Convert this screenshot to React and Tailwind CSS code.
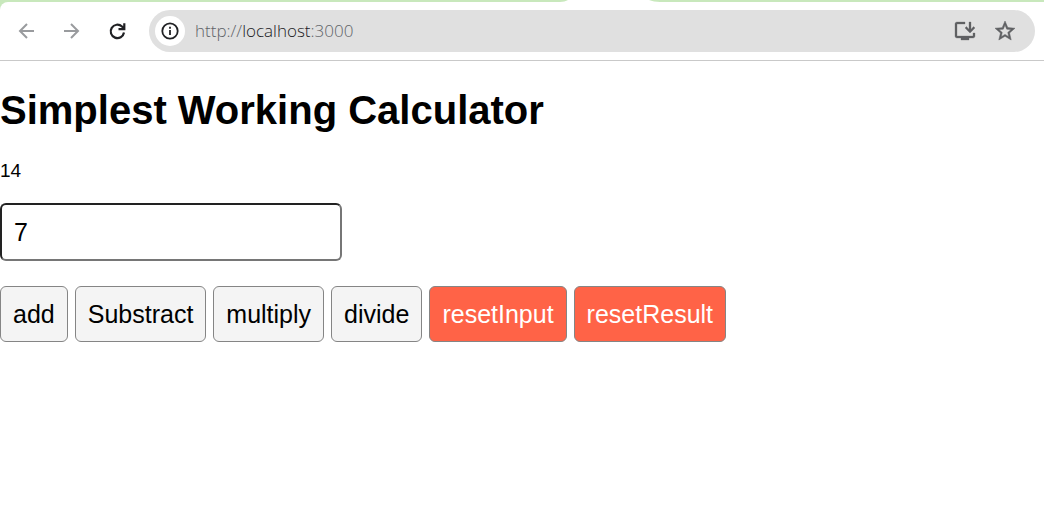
import { useState } from "react";

function BackIcon() {
  return (
    <svg viewBox="0 0 24 24" className="size-6" fill="none" stroke="currentColor" strokeWidth="2" aria-hidden="true">
      <path d="M19 12H5.400M12 5l-7 7 7 7" />
    </svg>
  );
}

function ForwardIcon() {
  return (
    <svg viewBox="0 0 24 24" className="size-6" fill="none" stroke="currentColor" strokeWidth="2" aria-hidden="true">
      <path d="M4 12h13.600M11 5l7 7-7 7" />
    </svg>
  );
}

function ReloadIcon() {
  return (
    <svg viewBox="0 0 24 24" className="size-6" fill="none" stroke="currentColor" strokeWidth="2.2" aria-hidden="true">
      <path d="M19 13.500A6.700 6.700 0 1 1 17 7.500l2 2" />
      <path d="M19.300 4.300v5.800h-5.800" />
      <path d="M16 9.500L19.300 6.500v3.600z" fill="currentColor" stroke="none" />
    </svg>
  );
}

function InfoIcon() {
  return (
    <svg viewBox="0 0 20 20" className="size-5" fill="none" stroke="currentColor" strokeWidth="1.800" aria-hidden="true">
      <circle cx="10" cy="10" r="7.700" />
      <path d="M10 9v5M10 5.800v1.900" />
    </svg>
  );
}

function InstallIcon() {
  return (
    <svg viewBox="0 0 24 24" className="size-6" fill="currentColor" stroke="currentColor" strokeWidth="0.3" aria-hidden="true">
      <path d="M20 17H4V5h8V3H4c-1.110 0-2 .89-2 2v12c0 1.100.89 2 2 2h4v2h8v-2h4c1.100 0 2-.9 2-2v-3h-2v3z" />
      <path d="M17 14l5-5-1.410-1.410L18 10.170V3h-2v7.170l-2.590-2.580L12 9l5 5z" />
    </svg>
  );
}

function StarIcon() {
  return (
    <svg viewBox="0 0 24 24" className="size-6" fill="currentColor" stroke="currentColor" strokeWidth="0.5" aria-hidden="true">
      <path d="M22 9.240l-7.190-.62L12 2 9.190 8.630 2 9.240l5.460 4.730L5.820 21 12 17.270 18.180 21l-1.630-7.030L22 9.240zM12 15.400l-3.760 2.270 1-4.280-3.320-2.880 4.380-.38L12 6.100l1.710 4.040 4.380.38-3.320 2.880 1 4.280L12 15.400z" />
    </svg>
  );
}

function BrowserBar() {
  return (
    <header className="bg-[#c8e8bc]">
      <div className="flex h-0.5 justify-end">
        <svg viewBox="0 0 100 2" className="mr-96 h-0.5 w-[100px]" aria-hidden="true">
          <path d="M0 2C3 2 6 1 8 0H89C92 1 96 2 100 2z" fill="#fff" />
        </svg>
      </div>
      <div className="flex items-center rounded-tl-lg border-b border-[#c9c9c9] bg-white py-2 pr-[9px] pl-[15px]">
        <nav className="flex gap-[21px] pr-5" aria-label="Browser">
          <button type="button" aria-label="Back" className="text-[#999b9e]"><BackIcon /></button>
          <button type="button" aria-label="Forward" className="text-[#999b9e]"><ForwardIcon /></button>
          <button type="button" aria-label="Reload" className="text-[#202124]"><ReloadIcon /></button>
        </nav>
        <div className="flex h-[42px] grow items-center rounded-full bg-[#e0e0e0] pr-[18px] pl-1.5">
          <button type="button" aria-label="Site information" className="flex size-[30px] items-center justify-center rounded-full bg-white text-[#202124]">
            <InfoIcon />
          </button>
          <p className="grow pl-2.5 font-['Open_Sans',sans-serif] text-[17px] leading-7 font-light text-[#5f6368]">
            http://<span className="text-[#202124]">localhost</span>:3000
          </p>
          <div className="flex gap-4 text-[#5f6063]">
            <button type="button" aria-label="Install app"><InstallIcon /></button>
            <button type="button" aria-label="Bookmark"><StarIcon /></button>
          </div>
        </div>
      </div>
    </header>
  );
}

const actionClass = "rounded-md border border-[#858585] px-3 py-2 text-[25px] leading-[38px]";

function Calculator() {
  const [result, setResult] = useState(14);
  const [value, setValue] = useState("7");
  const operand = Number(value);

  return (
    <main className="pt-6 font-['Liberation_Sans',sans-serif] text-black">
      <h1 className="text-[40px] leading-[50px] font-bold">Simplest Working Calculator</h1>
      <form onSubmit={(event) => event.preventDefault()}>
        <p className="pt-6 text-[19px] leading-6">{result}</p>
        <input
          type="text"
          inputMode="decimal"
          aria-label="Number"
          value={value}
          onChange={(event) => setValue(event.target.value)}
          className="mt-5 block h-[58px] w-[342px] rounded-md border-2 border-[#767676] border-t-[#222] border-l-[#222] px-3 text-[25px]"
        />
        <div className="mt-[25px] flex flex-wrap gap-[7px]">
          <button type="button" onClick={() => setResult(result + operand)} className={`${actionClass} bg-[#f4f4f4]`}>add</button>
          <button type="button" onClick={() => setResult(result - operand)} className={`${actionClass} bg-[#f4f4f4]`}>Substract</button>
          <button type="button" onClick={() => setResult(result * operand)} className={`${actionClass} bg-[#f4f4f4]`}>multiply</button>
          <button type="button" onClick={() => setResult(result / operand)} className={`${actionClass} bg-[#f4f4f4]`}>divide</button>
          <button type="button" onClick={() => setValue("")} className={`${actionClass} bg-[#ff6347] text-white`}>resetInput</button>
          <button type="button" onClick={() => setResult(0)} className={`${actionClass} bg-[#ff6347] text-white`}>resetResult</button>
        </div>
      </form>
    </main>
  );
}

export default function App() {
  return (
    <div className="min-h-screen bg-white">
      <BrowserBar />
      <Calculator />
    </div>
  );
}
